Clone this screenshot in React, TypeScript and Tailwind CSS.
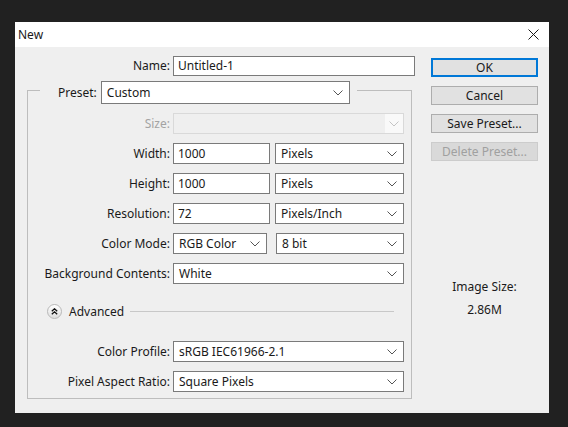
import React from 'react';

const font = { fontFamily: '"Noto Sans", "Open Sans", sans-serif' };

function Chevron({ disabled = false }: { disabled?: boolean }) {
  return (
    <svg width="10" height="6" viewBox="0 0 10 6" className="shrink-0">
      <path d="M0.5 0.5 L5 5 L9.5 0.5" fill="none" stroke={disabled ? '#c4c4c4' : '#555555'} strokeWidth="1" />
    </svg>
  );
}

function Select({ value, w, disabled = false }: { value?: string; w: string; disabled?: boolean }) {
  if (disabled) {
    return (
      <div className={`${w} h-full flex items-center border border-[#d9d9d9] bg-[#efefef]`}>
        <div className="flex-1" />
        <div className="w-[18px] h-full flex items-center justify-center bg-[#f9f9f9]">
          <Chevron disabled />
        </div>
      </div>
    );
  }
  return (
    <div className={`${w} h-full flex items-center justify-between border border-[#7a7a7a] bg-white pl-[5px] pr-[6px]`}>
      <span className="text-[#1a1a1a] leading-none">{value}</span>
      <Chevron />
    </div>
  );
}

function Input({ value, w }: { value: string; w: string }) {
  return (
    <div className={`${w} h-full flex items-center border border-[#7a7a7a] bg-white pl-[4px]`}>
      <span className="text-[#1a1a1a] leading-none">{value}</span>
    </div>
  );
}

function Row({ label, children, disabled = false }: { label: string; children: React.ReactNode; disabled?: boolean }) {
  return (
    <div className="flex items-center h-[21px]">
      <div className={`w-[142px] text-right ${disabled ? 'text-[#a3a3a3]' : 'text-[#1a1a1a]'}`}>{label}</div>
      <div className="ml-[3px] flex h-full gap-[5px]">{children}</div>
    </div>
  );
}

function Button({ label, variant = 'normal' }: { label: string; variant?: 'default' | 'normal' | 'disabled' }) {
  const cls =
    variant === 'default'
      ? 'border-2 border-[#0078d7] bg-[#e1e1e1] text-[#1a1a1a]'
      : variant === 'disabled'
        ? 'border border-[#cccccc] bg-[#d9d9d9] text-[#a0a0a0]'
        : 'border border-[#adadad] bg-[#e1e1e1] text-[#1a1a1a]';
  return <div className={`h-[19px] w-full flex items-center justify-center ${cls}`}>{label}</div>;
}

export default function App() {
  return (
    <div className="w-[568px] h-[427px] bg-[#212121] pt-[22px] pl-[15px] text-[12px]" style={font}>
      <div className="w-[534px] h-[391px] bg-[#efefef] flex flex-col">
        {/* Title bar */}
        <div className="h-[25px] bg-white flex items-center justify-between pl-[3px] pr-[10px]">
          <span className="text-[#1a1a1a]">New</span>
          <svg width="11" height="11" viewBox="0 0 11 11">
            <path d="M0.5 0.5 L10.5 10.5 M10.5 0.5 L0.5 10.5" stroke="#1a1a1a" strokeWidth="1" />
          </svg>
        </div>

        <div className="flex">
          {/* Left column */}
          <div className="w-[400px] flex flex-col">
            <div className="mt-[9px] flex items-center h-[20px]">
              <div className="w-[155px] text-right text-[#1a1a1a]">Name:</div>
              <div className="ml-[3px] h-full">
                <Input value="Untitled-1" w="w-[242px]" />
              </div>
            </div>

            <fieldset className="mt-[5px] ml-[12px] w-[385px] border border-[#bdbdbd] pb-[6px]">
              <legend className="ml-[12px] p-0 h-[19px]">
                <div className="flex items-center h-[23px] pl-[18px] pr-[7px]">
                  <span className="text-[#1a1a1a]">Preset:</span>
                  <div className="ml-[4px] h-full">
                    <Select value="Custom" w="w-[249px]" />
                  </div>
                </div>
              </legend>

              <div className="mt-[13px] flex flex-col gap-[9px]">
                <Row label="Size:" disabled>
                  <Select w="w-[231px]" disabled />
                </Row>
                <Row label="Width:">
                  <Input value="1000" w="w-[97px]" />
                  <Select value="Pixels" w="w-[129px]" />
                </Row>
                <Row label="Height:">
                  <Input value="1000" w="w-[97px]" />
                  <Select value="Pixels" w="w-[129px]" />
                </Row>
                <Row label="Resolution:">
                  <Input value="72" w="w-[97px]" />
                  <Select value="Pixels/Inch" w="w-[129px]" />
                </Row>
                <Row label="Color Mode:">
                  <Select value="RGB Color" w="w-[94px]" />
                  <div className="ml-[4px] h-full">
                    <Select value="8 bit" w="w-[128px]" />
                  </div>
                </Row>
                <Row label="Background Contents:">
                  <Select value="White" w="w-[231px]" />
                </Row>
              </div>

              {/* Advanced */}
              <div className="mt-[20px] flex items-center h-[15px] pl-[19px] pr-[17px]">
                <div className="w-[15px] h-[15px] rounded-full border border-[#b8b8b8] bg-gradient-to-b from-white to-[#dedede] flex items-center justify-center">
                  <svg width="7" height="7" viewBox="0 0 7 7">
                    <path d="M0.8 3.3 L3.5 0.8 L6.2 3.3 M0.8 6.3 L3.5 3.8 L6.2 6.3" fill="none" stroke="#111111" strokeWidth="1.3" />
                  </svg>
                </div>
                <span className="ml-[7px] text-[#1a1a1a]">Advanced</span>
                <div className="ml-[6px] flex-1 h-px bg-[#c8c8c8]" />
              </div>

              <div className="mt-[22px] flex flex-col gap-[9px]">
                <Row label="Color Profile:">
                  <Select value="sRGB IEC61966-2.1" w="w-[231px]" />
                </Row>
                <Row label="Pixel Aspect Ratio:">
                  <Select value="Square Pixels" w="w-[231px]" />
                </Row>
              </div>
            </fieldset>
          </div>

          {/* Right column */}
          <div className="ml-[16px] w-[107px] flex flex-col">
            <div className="mt-[11px] flex flex-col gap-[9px]">
              <Button label="OK" variant="default" />
              <Button label="Cancel" />
              <Button label="Save Preset..." />
              <Button label="Delete Preset..." variant="disabled" />
            </div>
            <div className="mt-[118px] text-center text-[#1a1a1a] leading-[16px]">Image Size:</div>
            <div className="mt-[7px] text-center text-[#1a1a1a] leading-[16px]">2.86M</div>
          </div>
        </div>
      </div>
    </div>
  );
}
